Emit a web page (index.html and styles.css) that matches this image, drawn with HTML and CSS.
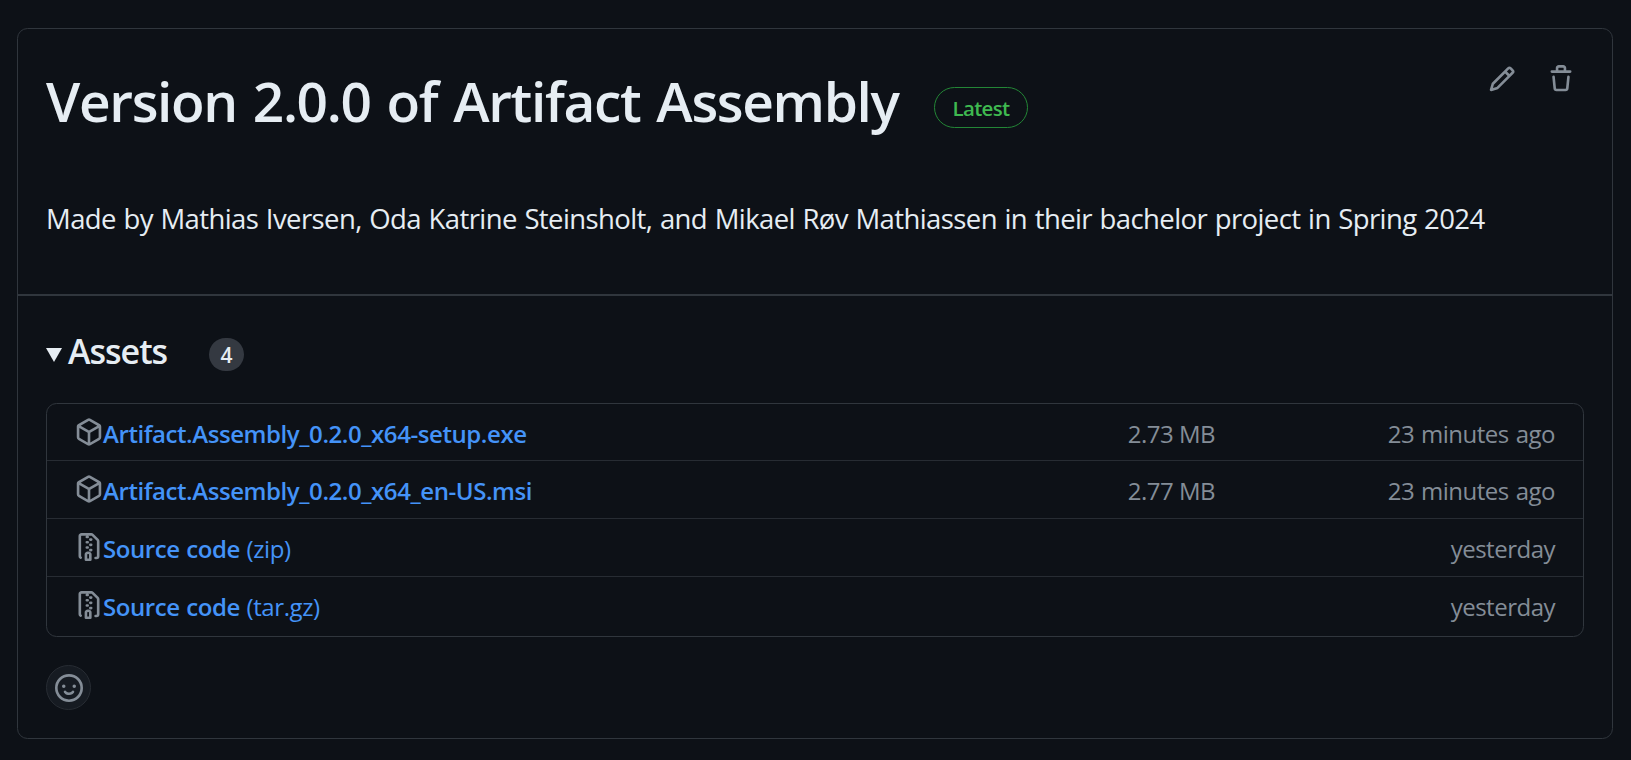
FILE: index.html
```html
<!DOCTYPE html>
<html lang="en">
<head>
<meta charset="utf-8">
<title>Version 2.0.0 of Artifact Assembly</title>
<link rel="stylesheet" href="styles.css">
</head>
<body>
<svg class="sprite" aria-hidden="true">
  <symbol id="package" viewBox="0 0 16 16"><path d="m8.878.392 5.25 3.045c.54.314.872.89.872 1.514v6.098a1.75 1.75 0 0 1-.872 1.514l-5.25 3.045a1.75 1.75 0 0 1-1.756 0l-5.25-3.045A1.75 1.75 0 0 1 1 11.049V4.951c0-.624.332-1.201.872-1.514L7.122.392a1.75 1.75 0 0 1 1.756 0ZM7.875 1.69l-4.63 2.685L8 7.133l4.755-2.758-4.63-2.685a.248.248 0 0 0-.25 0ZM2.5 5.677v5.372c0 .09.047.171.125.216l4.625 2.683V8.432Zm6.25 8.271 4.625-2.683a.25.25 0 0 0 .125-.216V5.677L8.75 8.432Z"/></symbol>
  <symbol id="file-zip" viewBox="0 0 16 16"><path d="M3.5 1.75v11.5c0 .09.048.173.126.217a.75.75 0 0 1-.752 1.298A1.748 1.748 0 0 1 2 13.25V1.75C2 .784 2.784 0 3.75 0h5.586c.464 0 .909.185 1.237.513l2.914 2.914c.329.328.513.773.513 1.237v8.586A1.75 1.75 0 0 1 12.25 15h-.5a.75.75 0 0 1 0-1.5h.5a.25.25 0 0 0 .25-.25V4.664a.25.25 0 0 0-.073-.177L9.513 1.573a.25.25 0 0 0-.177-.073H7.25a.75.75 0 0 1 0 1.5h-.5a.75.75 0 0 1 0-1.5h-3a.25.25 0 0 0-.25.25Zm3.75 8.75h.5c.966 0 1.75.784 1.75 1.75v3a.75.75 0 0 1-.75.75h-2.5a.75.75 0 0 1-.75-.75v-3c0-.966.784-1.75 1.75-1.75ZM6 5.25a.75.75 0 0 1 .75-.75h.5a.75.75 0 0 1 0 1.5h-.5A.75.75 0 0 1 6 5.25Zm.75 2.25h.5a.75.75 0 0 1 0 1.5h-.5a.75.75 0 0 1 0-1.5ZM8 6.75A.75.75 0 0 1 8.75 6h.5a.75.75 0 0 1 0 1.5h-.5A.75.75 0 0 1 8 6.75ZM8.75 3h.5a.75.75 0 0 1 0 1.5h-.5a.75.75 0 0 1 0-1.5ZM8 9.75A.75.75 0 0 1 8.75 9h.5a.75.75 0 0 1 0 1.5h-.5A.75.75 0 0 1 8 9.75Zm-1 2.5v2.25h1v-2.25a.25.25 0 0 0-.25-.25h-.5a.25.25 0 0 0-.25.25Z"/></symbol>
</svg>
<main class="card">
  <section class="release">
    <div class="heading">
      <h1 class="title">Version 2.0.0 of Artifact Assembly</h1>
      <span class="label">Latest</span>
      <div class="actions">
        <svg class="icon" viewBox="0 0 16 16"><path d="M11.013 1.427a1.75 1.75 0 0 1 2.474 0l1.086 1.086a1.75 1.75 0 0 1 0 2.474l-8.61 8.61c-.21.21-.47.364-.756.445l-3.251.93a.75.75 0 0 1-.927-.928l.929-3.25c.081-.286.235-.547.445-.758l8.61-8.61Zm.176 4.823L9.75 4.81l-6.286 6.287a.253.253 0 0 0-.064.108l-.558 1.953 1.953-.558a.253.253 0 0 0 .108-.064Zm1.238-3.763a.25.25 0 0 0-.354 0L10.811 3.75l1.439 1.44 1.263-1.263a.25.25 0 0 0 0-.354Z"/></svg>
        <svg class="icon" viewBox="0 0 16 16"><path d="M11 1.75V3h2.25a.75.75 0 0 1 0 1.5H2.75a.75.75 0 0 1 0-1.5H5V1.75C5 .784 5.784 0 6.75 0h2.5C10.216 0 11 .784 11 1.75ZM4.496 6.675l.66 6.6a.25.25 0 0 0 .249.225h5.19a.25.25 0 0 0 .249-.225l.66-6.6a.75.75 0 0 1 1.492.149l-.66 6.6A1.748 1.748 0 0 1 10.595 15h-5.19a1.75 1.75 0 0 1-1.741-1.575l-.66-6.6a.75.75 0 1 1 1.492-.15ZM6.5 1.75V3h3V1.75a.25.25 0 0 0-.25-.25h-2.5a.25.25 0 0 0-.25.25Z"/></svg>
      </div>
    </div>
    <p class="notes">Made by Mathias Iversen, Oda Katrine Steinsholt, and Mikael Røv Mathiassen in their bachelor project in Spring 2024</p>
  </section>
  <section class="assets">
    <div class="summary">
      <svg class="caret" viewBox="0 0 16 14"><path d="M0 0h16L8 14z"/></svg>
      <h2 class="assets-title">Assets</h2>
      <span class="counter">4</span>
    </div>
    <ul class="list">
      <li class="row"><svg class="icon"><use href="#package"/></svg><a class="name">Artifact.Assembly_0.2.0_x64-setup.exe</a><span class="size">2.73 MB</span><span class="time">23 minutes ago</span></li>
      <li class="row"><svg class="icon"><use href="#package"/></svg><a class="name">Artifact.Assembly_0.2.0_x64_en-US.msi</a><span class="size">2.77 MB</span><span class="time">23 minutes ago</span></li>
      <li class="row"><svg class="icon"><use href="#file-zip"/></svg><a class="name">Source code <span class="kind">(zip)</span></a><span class="time">yesterday</span></li>
      <li class="row"><svg class="icon"><use href="#file-zip"/></svg><a class="name">Source code <span class="kind">(tar.gz)</span></a><span class="time">yesterday</span></li>
    </ul>
    <button class="react" aria-label="Add reaction"><svg class="icon" viewBox="0 0 16 16"><path d="M8 0a8 8 0 1 1 0 16A8 8 0 0 1 8 0ZM1.5 8a6.5 6.5 0 1 0 13 0 6.5 6.5 0 0 0-13 0Zm3.82 1.636a.75.75 0 0 1 1.038.175l.007.009c.103.118.22.222.35.31.264.178.683.37 1.285.37.602 0 1.02-.192 1.285-.371.13-.088.247-.192.35-.31l.007-.008a.75.75 0 0 1 1.222.87l-.022-.015c.02.013.021.015.021.015v.001l-.001.002-.002.003-.005.007-.014.019a2.066 2.066 0 0 1-.184.213c-.16.166-.338.316-.53.445-.63.418-1.37.638-2.127.629-.946 0-1.652-.308-2.126-.63a3.331 3.331 0 0 1-.715-.657l-.014-.02-.005-.006-.002-.003v-.002h-.001l.613-.432-.614.43a.75.75 0 0 1 .183-1.044ZM12 7a1 1 0 1 1-2 0 1 1 0 0 1 2 0ZM5 8a1 1 0 1 1 0-2 1 1 0 0 1 0 2Z"/></svg></button>
  </section>
</main>
</body>
</html>
```
FILE: styles.css
```css
* { box-sizing: border-box; }
body {
  margin: 0;
  padding: 28px 18px 21px 17px;
  background: #0d1117;
  color: #e6edf3;
  font-family: "Open Sans", "Noto Sans", sans-serif;
}
.sprite { display: none; }
.card {
  height: 711px;
  border: 1px solid #30363d;
  border-radius: 10.5px;
}
.icon { width: 28px; height: 28px; flex: none; fill: #848d97; }
.release {
  height: 267px;
  padding: 0 28px;
  border-bottom: 2px solid #30363d;
}
.heading { display: flex; height: 146px; white-space: nowrap; }
.title {
  width: 888px;
  margin: 0;
  padding-top: 37px;
  font-size: 55px;
  line-height: 70px;
  font-weight: 600;
  letter-spacing: -1.35px;
  word-spacing: 3px;
}
.label {
  width: 94px;
  height: 41px;
  margin-top: 58px;
  border: 1px solid #238636;
  border-radius: 21px;
  color: #3fb950;
  font-size: 20.5px;
  line-height: 40px;
  font-weight: 600;
  text-align: center;
  letter-spacing: -0.7px;
}
.actions { display: flex; gap: 31px; margin: 36px 9px 0 auto; }
.notes {
  margin: 0;
  font-size: 27.5px;
  line-height: 42px;
  letter-spacing: -0.6px;
  word-spacing: 1.05px;
  padding-top: 23px;
  white-space: nowrap;
}
.assets { padding: 0 28px; }
.summary { display: flex; height: 107px; padding-top: 42px; }
.caret { width: 16px; height: 14px; margin-top: 10px; fill: #e6edf3; }
.assets-title {
  width: 141px;
  margin: -5px 0 0;
  padding-left: 6px;
  font-size: 34px;
  line-height: 36px;
  font-weight: 600;
  letter-spacing: -1px;
}
.counter {
  width: 35px;
  height: 33px;
  margin-left: 6px;
  border-radius: 17px;
  background: #343941;
  font-size: 21px;
  line-height: 34px;
  font-weight: 600;
  text-align: center;
}
.list {
  margin: 0;
  padding: 0;
  list-style: none;
  height: 234px;
  border: 1px solid #30363d;
  border-radius: 10.5px;
}
.row {
  display: flex;
  height: 58px;
  padding: 14px 28px 0;
  border-top: 1px solid #272c33;
  font-size: 24px;
  line-height: 31px;
  white-space: nowrap;
}
.row:first-child { height: 56px; border-top: 0; }
.name {
  flex: 1;
  color: #4493f8;
  font-weight: 600;
  letter-spacing: -0.42px;
  word-spacing: 0.8px;
}
.kind { font-weight: 400; }
.size, .time { color: #848d97; text-align: right; letter-spacing: -0.5px; }
.size { width: 120px; }
.time { width: 340px; word-spacing: 1.2px; }
.react {
  display: flex;
  align-items: center;
  justify-content: center;
  width: 45px;
  height: 45px;
  margin-top: 28px;
  padding: 0;
  border: 1px solid #272c33;
  border-radius: 50%;
  background: #161b22;
}
```
